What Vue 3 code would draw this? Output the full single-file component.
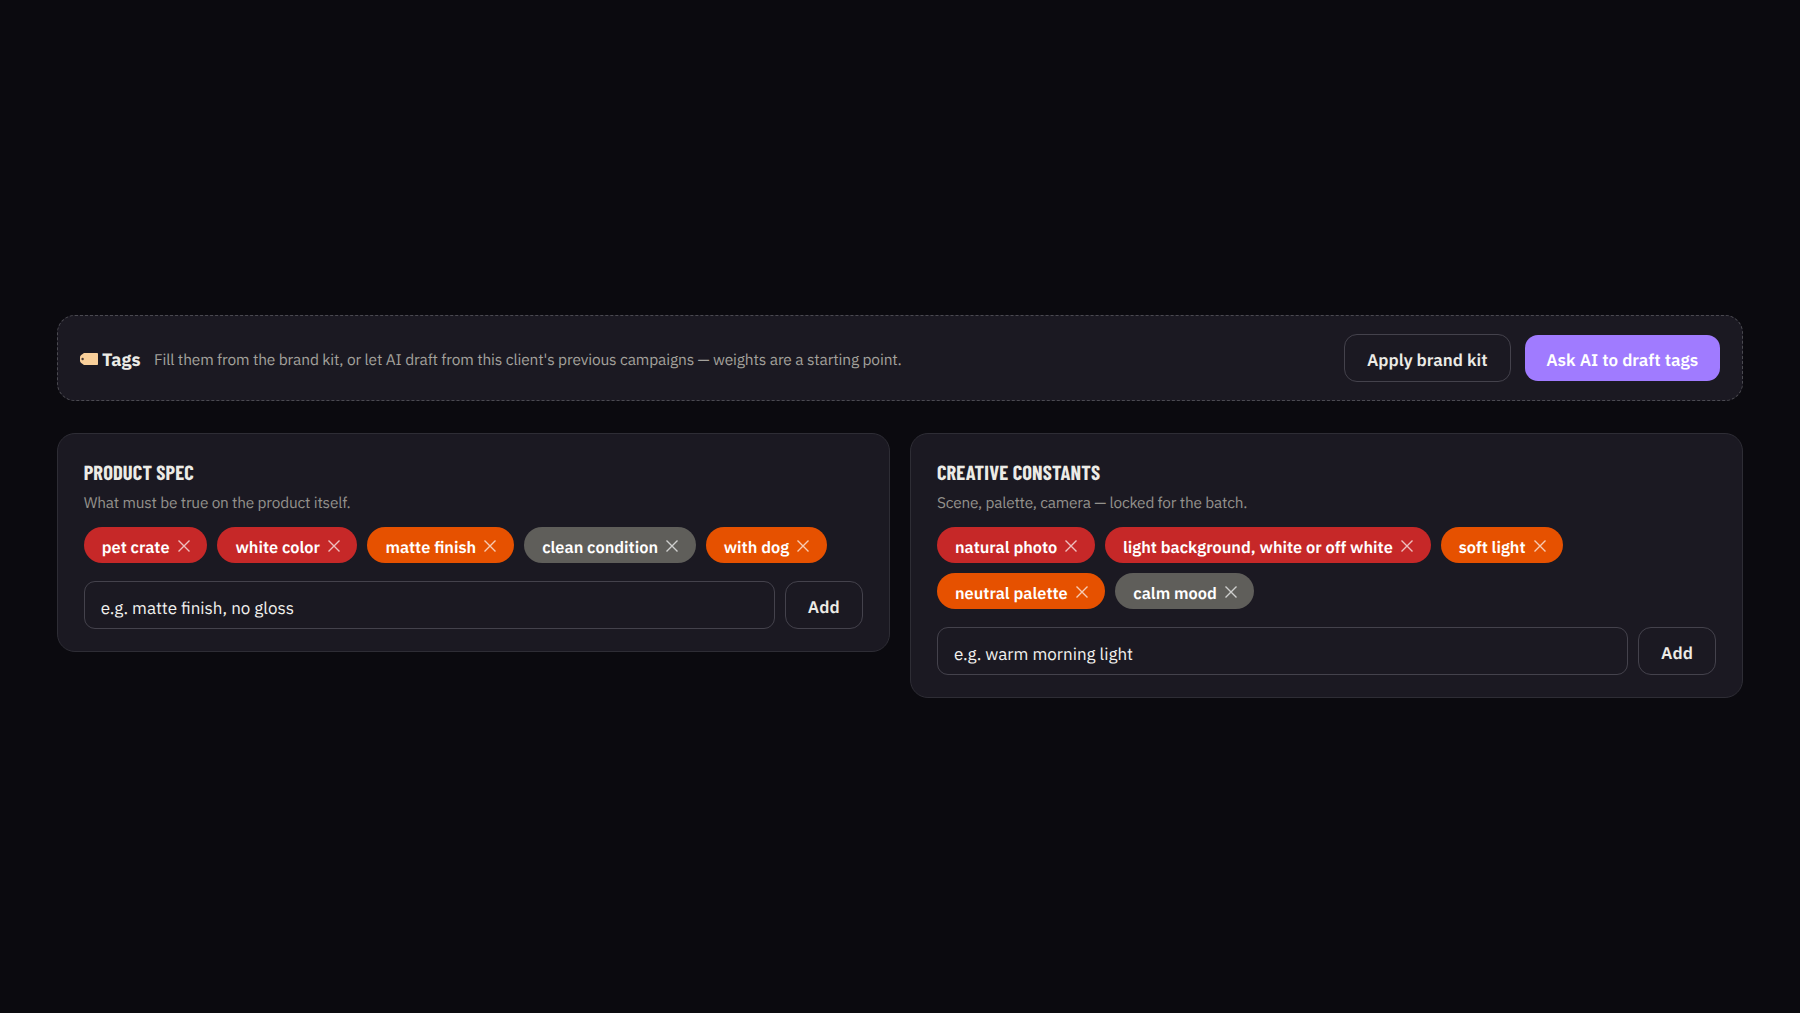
<template>
  <main class="page">
    <section class="toolbar">
      <div class="toolbar-title">
        <svg class="tag-icon" width="18" height="12" viewBox="0 0 18 12">
          <path d="M4 0H17.2Q18 0 18 .8V11.2Q18 12 17.2 12H4L1.2 10Q0 9 0 7.7V4.3Q0 3 1.2 2Z" fill="#f9cf9a" />
          <circle cx="2.6" cy="6" r="1.2" fill="#4a3a35" />
        </svg>
        <strong>Tags</strong>
      </div>
      <p class="toolbar-hint">
        Fill them from the brand kit, or let AI draft from this client's previous campaigns — weights are a starting point.
      </p>
      <button class="btn btn-apply">Apply brand kit</button>
      <button class="btn btn-primary">Ask AI to draft tags</button>
    </section>

    <div class="cards">
      <section v-for="group in groups" :key="group.title" class="card">
        <h2 class="card-title">{{ group.title }}</h2>
        <p class="card-hint">{{ group.hint }}</p>
        <div class="chips">
          <span
            v-for="tag in group.tags"
            :key="tag.label"
            class="chip"
            :class="tag.weight"
            :style="{ width: tag.width + 'px' }"
          >
            <span class="chip-label">{{ tag.label }}</span>
            <svg class="chip-remove" width="12" height="12" viewBox="0 0 12 12" @click="removeTag(group, tag)">
              <path d="M.5 .5L11.5 11.5M11.5 .5L.5 11.5" />
            </svg>
          </span>
        </div>
        <form class="add-row" @submit.prevent="addTag(group)">
          <input v-model="group.draft" class="add-input" :placeholder="group.placeholder" />
          <button class="btn btn-add">Add</button>
        </form>
      </section>
    </div>
  </main>
</template>

<script setup>
import { reactive } from 'vue';

const groups = reactive([
  {
    title: 'PRODUCT SPEC',
    hint: 'What must be true on the product itself.',
    placeholder: 'e.g. matte finish, no gloss',
    draft: '',
    tags: [
      { label: 'pet crate', weight: 'high', width: 123.7 },
      { label: 'white color', weight: 'high', width: 140.1 },
      { label: 'matte finish', weight: 'medium', width: 146.7 },
      { label: 'clean condition', weight: 'low', width: 171.5 },
      { label: 'with dog', weight: 'medium', width: 121.3 }
    ]
  },
  {
    title: 'CREATIVE CONSTANTS',
    hint: 'Scene, palette, camera — locked for the batch.',
    placeholder: 'e.g. warm morning light',
    draft: '',
    tags: [
      { label: 'natural photo', weight: 'high', width: 158 },
      { label: 'light background, white or off white', weight: 'high', width: 325.7 },
      { label: 'soft light', weight: 'medium', width: 122.3 },
      { label: 'neutral palette', weight: 'medium', width: 168.4 },
      { label: 'calm mood', weight: 'low', width: 139 }
    ]
  }
]);

const addTag = (group) => {
  const label = group.draft.trim();
  if (!label) return;
  group.tags.push({ label, weight: 'low' });
  group.draft = '';
};

const removeTag = (group, tag) => {
  group.tags = group.tags.filter((t) => t.label !== tag.label);
};
</script>

<style>
body {
  background: #0b0a0f;
}
</style>

<style scoped>
.page {
  box-sizing: border-box;
  min-height: 1013px;
  padding: 0 57px;
  display: flex;
  flex-direction: column;
  justify-content: center;
  gap: 32px;
  font-family: "IBM Plex Sans", Roboto, "Noto Sans", sans-serif;
  text-rendering: geometricPrecision;
  color: #ecebe6;
}
.toolbar {
  box-sizing: border-box;
  height: 86px;
  padding: 0 22px 0 21.5px;
  display: flex;
  align-items: center;
  background: #1b1922;
  border: 1px dashed #4b4a51;
  border-radius: 18px;
}
.toolbar-title {
  display: flex;
  align-items: center;
  gap: 4.5px;
  width: 74.5px;
  font-size: 18px;
  line-height: 24px;
}
.tag-icon {
  margin-top: 2px;
}
.toolbar-title strong {
  padding-top: 4px;
}
.toolbar-hint {
  flex: 1;
  margin: 0;
  padding-top: 4px;
  font-size: 15.5px;
  letter-spacing: -0.14px;
  color: #a3a19c;
  white-space: nowrap;
}
.btn {
  box-sizing: border-box;
  height: 48px;
  padding: 3px 0 0;
  flex-shrink: 0;
  border: 1px solid #44424c;
  border-radius: 13px;
  background: transparent;
  color: #ecebe6;
  font-family: inherit;
  text-rendering: inherit;
  font-size: 17px;
  font-weight: 600;
  white-space: nowrap;
}
.btn-apply {
  width: 166.5px;
}
.btn-primary {
  width: 195.5px;
  height: 46px;
  margin-left: 14px;
  border: none;
  background: #a07bff;
  color: #fff;
}
.cards {
  height: 265px;
  display: grid;
  grid-template-columns: 1fr 1fr;
  align-items: start;
  gap: 20.5px;
}
.card {
  box-sizing: border-box;
  min-width: 0;
  padding: 25.5px 26px 22.3px 25.7px;
  background: #1b1922;
  border: 1px solid #2e2d35;
  border-radius: 18px;
}
.card-title {
  margin: 0;
  width: max-content;
  font-family: "Barlow Condensed", "IBM Plex Sans", Roboto, sans-serif;
  font-size: 20.5px;
  line-height: 26px;
  font-weight: 700;
  letter-spacing: 0.13px;
}
.card-hint {
  margin: 6.9px 0 0;
  font-size: 15.4px;
  line-height: 22px;
  letter-spacing: -0.18px;
  color: #93918c;
}
.chips {
  margin-top: 13px;
  display: flex;
  flex-wrap: wrap;
  gap: 10.3px 10px;
}
.chip {
  box-sizing: border-box;
  height: 35.5px;
  padding: 0 18px;
  display: flex;
  align-items: center;
  gap: 8px;
  border-radius: 18px;
  color: #fff;
  font-size: 16.36px;
  font-weight: 600;
  white-space: nowrap;
}
.chip-label {
  padding-top: 4.5px;
}
.chip.high {
  background: #c62828;
}
.chip.medium {
  background: #e65100;
}
.chip.low {
  background: #5f5e5a;
}
.chip-remove {
  flex-shrink: 0;
  margin-top: 2.6px;
  cursor: pointer;
  stroke: #fff;
  stroke-width: 1.4;
  opacity: 0.7;
}
.add-row {
  margin-top: 18px;
  display: flex;
  gap: 10px;
}
.add-input {
  box-sizing: border-box;
  flex: 1;
  min-width: 0;
  height: 48px;
  padding: 17.5px 16px 11.5px;
  border: 1px solid #44424c;
  border-radius: 11px;
  outline: none;
  background: transparent;
  color: #f2f1ee;
  font-family: inherit;
  text-rendering: inherit;
  font-size: 17px;
  line-height: 17px;
}
.add-input::placeholder {
  color: #f2f1ee;
}
.btn-add {
  width: 78px;
  padding-top: 4px;
}
</style>
